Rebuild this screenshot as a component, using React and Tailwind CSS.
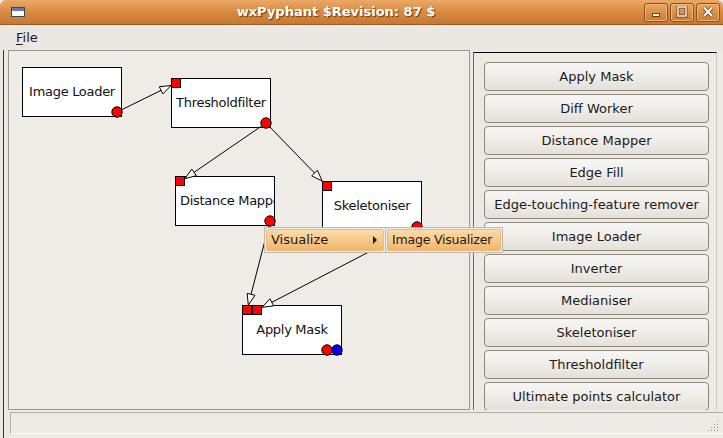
import React from 'react';

const tools = [
  'Apply Mask',
  'Diff Worker',
  'Distance Mapper',
  'Edge Fill',
  'Edge-touching-feature remover',
  'Image Loader',
  'Inverter',
  'Medianiser',
  'Skeletoniser',
  'Thresholdfilter',
  'Ultimate points calculator',
];

// node boxes, placed on the canvas (canvas padding box starts at page 9,51)
const nodes = [
  { name: 'Image Loader', pos: 'left-[13px] top-[16px]' },
  { name: 'Thresholdfilter', pos: 'left-[162px] top-[27px]' },
  { name: 'Distance Mapper', pos: 'left-[166px] top-[125px]', clip: true },
  { name: 'Skeletoniser', pos: 'left-[313px] top-[130px]' },
  { name: 'Apply Mask', pos: 'left-[233px] top-[254px]' },
];

// connections in page coordinates: from output port to arrow tip
const links = [
  [117, 112, 171, 85.5],
  [266, 123, 185, 178.6],
  [266, 123, 322.2, 181],
  [270, 221, 248.3, 305],
  [417, 227, 262, 307.4],
];

const squares = [
  [171.5, 78.5],
  [175.5, 176.5],
  [322.5, 181.5],
  [242.5, 305.5],
  [252.5, 305.5],
];

const circles = [
  [117, 112, '#ff0000'],
  [266, 123, '#ff0000'],
  [270, 221, '#ff0000'],
  [417, 227, '#ff0000'],
  [327, 350, '#ff0000'],
  [337, 350, '#0000ff'],
];

const Link = ({ x1, y1, x2, y2 }) => {
  const a = Math.atan2(y2 - y1, x2 - x1);
  const bx = x2 - 11 * Math.cos(a);
  const by = y2 - 11 * Math.sin(a);
  const s = 4 * Math.sin(a);
  const c = 4 * Math.cos(a);
  return (
    <g>
      <line x1={x1} y1={y1} x2={bx} y2={by} stroke="#000" strokeWidth="1" />
      <polygon
        points={`${x2},${y2} ${bx + s},${by - c} ${bx - s},${by + c}`}
        fill="#fff"
        stroke="#000"
        strokeWidth="1"
      />
    </g>
  );
};

const TitleButton = ({ children }) => (
  <div className="w-[24px] h-[19px] rounded-[3px] border border-[#8c4f1b] bg-gradient-to-b from-[#eaa762] to-[#c77a33] shadow-[inset_0_0_0_1px_#f2b878] flex items-center justify-center">
    <svg width="14" height="12" viewBox="0 0 14 12">
      {children}
    </svg>
  </div>
);

const App = () => {
  return (
    <div className="w-[723px] h-[438px] bg-[#edeae5] overflow-hidden relative font-['DejaVu_Sans',sans-serif] text-[13px] text-[#1a1a1a]">
      {/* title bar */}
      <div className="h-[25px] rounded-t-[6px] border-b border-[#9c5d24] bg-gradient-to-b from-[#eaa965] via-[#d98b42] to-[#c67833] flex items-center">
        <div className="w-[28px] flex justify-end pr-[3px]">
          <div className="w-[14px] h-[10px] border border-[#3a4660] bg-white">
            <div className="h-[3px] bg-[#5a7fbf]" />
          </div>
        </div>
        <div className="flex-1 text-center font-bold text-white text-[13px] [text-shadow:1px_1px_1px_#6b3a10]">
          wxPyphant $Revision: 87 $
        </div>
        <div className="flex gap-[2px] pr-[3px]">
          <TitleButton>
            <rect x="3.5" y="7.5" width="7" height="3" fill="#fff" stroke="#6b3a10" />
          </TitleButton>
          <TitleButton>
            <rect x="3" y="1" width="8" height="9" fill="none" stroke="#6b3a10" strokeWidth="3" />
            <rect x="3" y="1" width="8" height="9" fill="none" stroke="#fff" strokeWidth="1.4" />
          </TitleButton>
          <TitleButton>
            <path d="M3 1.5 L11 10 M11 1.5 L3 10" stroke="#6b3a10" strokeWidth="3.6" />
            <path d="M3 1.5 L11 10 M11 1.5 L3 10" stroke="#fff" strokeWidth="2" />
          </TitleButton>
        </div>
      </div>

      {/* menu bar */}
      <div className="h-[25px] flex items-center pl-[16px] bg-[#ebe8e3]">
        <span>
          <span className="underline underline-offset-2">F</span>ile
        </span>
      </div>

      {/* main area */}
      <div className="ml-[3px] h-[388px] border-l border-[#3a3835] flex flex-col">
        <div className="h-[362px] flex">
          <div className="ml-[4px] w-[462px] h-[360px] border border-[#9d968a] bg-[#efebe7] relative overflow-hidden">
            {nodes.map((n) => (
              <div
                key={n.name}
                className={`absolute ${n.pos} w-[100px] h-[50px] bg-white border border-black flex items-center overflow-hidden whitespace-nowrap text-[13px] tracking-[-0.3px] text-[#111] ${
                  n.clip ? 'justify-start pl-[4px]' : 'justify-center'
                }`}
              >
                {n.name}
              </div>
            ))}
            <svg
              className="absolute left-0 top-0"
              width="460"
              height="358"
              viewBox="9 51 460 358"
            >
              {links.map(([x1, y1, x2, y2], i) => (
                <Link key={i} x1={x1} y1={y1} x2={x2} y2={y2} />
              ))}
              {squares.map(([x, y], i) => (
                <rect key={i} x={x} y={y} width="9" height="9" fill="#ff0000" stroke="#000" strokeWidth="1" />
              ))}
              {circles.map(([x, y, c], i) => (
                <circle key={i} cx={x} cy={y} r="5.2" fill={c} stroke="#000" strokeWidth="1" />
              ))}
            </svg>
          </div>

          <div className="ml-[3px] mt-[2px] w-[244px] h-[358px] border-t border-l border-t-black border-l-[#6f6a63] border-r border-r-[#cdc8c0] overflow-hidden pl-[10px] pt-[9px] flex flex-col gap-[3px]">
            {tools.map((t) => (
              <button
                key={t}
                className="shrink-0 w-[225px] h-[29px] rounded-[4px] border border-[#8e877c] bg-gradient-to-b from-[#f8f7f5] via-[#f0ede9] to-[#e3dfd9] text-[13px] text-[#1a1a1a] flex items-center justify-center whitespace-nowrap"
              >
                {t}
              </button>
            ))}
          </div>
        </div>

        <div className="ml-[6px] h-[22px] border-t border-l border-[#b3aea6] border-b border-b-white relative">
          <svg className="absolute right-[4px] bottom-[1px]" width="12" height="12" viewBox="0 0 12 12">
            {[[10, 2], [10, 5], [7, 5], [10, 8], [7, 8], [4, 8], [10, 11], [7, 11], [4, 11], [1, 11]].map(([x, y], i) => (
              <rect key={i} x={x} y={y - 1} width="1" height="1" fill="#9a948a" />
            ))}
          </svg>
        </div>
      </div>

      {/* context menu */}
      <div className="absolute left-[264px] top-[227px] flex whitespace-nowrap">
        <div className="w-[122px] h-[26px] border border-[#c3b9aa] bg-[#efebe7] p-[1px]">
          <div className="h-full rounded-[2px] border border-[#e9bb80] bg-gradient-to-b from-[#fddca7] to-[#f1b56d] flex items-center pl-[4px] pr-[5px]">
            <span className="flex-1">Visualize</span>
            <svg width="5" height="8" viewBox="0 0 5 8">
              <path d="M0 0 L4 4 L0 8 Z" fill="#111" />
            </svg>
          </div>
        </div>
        <div className="-ml-[1px] w-[118px] h-[26px] border border-[#c3b9aa] bg-[#efebe7] p-[1px]">
          <div className="h-full rounded-[2px] border border-[#e9bb80] bg-gradient-to-b from-[#fddca7] to-[#f1b56d] flex items-center pl-[4px] text-[12.5px] tracking-[-0.2px]">
            Image Visualizer
          </div>
        </div>
      </div>
    </div>
  );
};

export default App;
